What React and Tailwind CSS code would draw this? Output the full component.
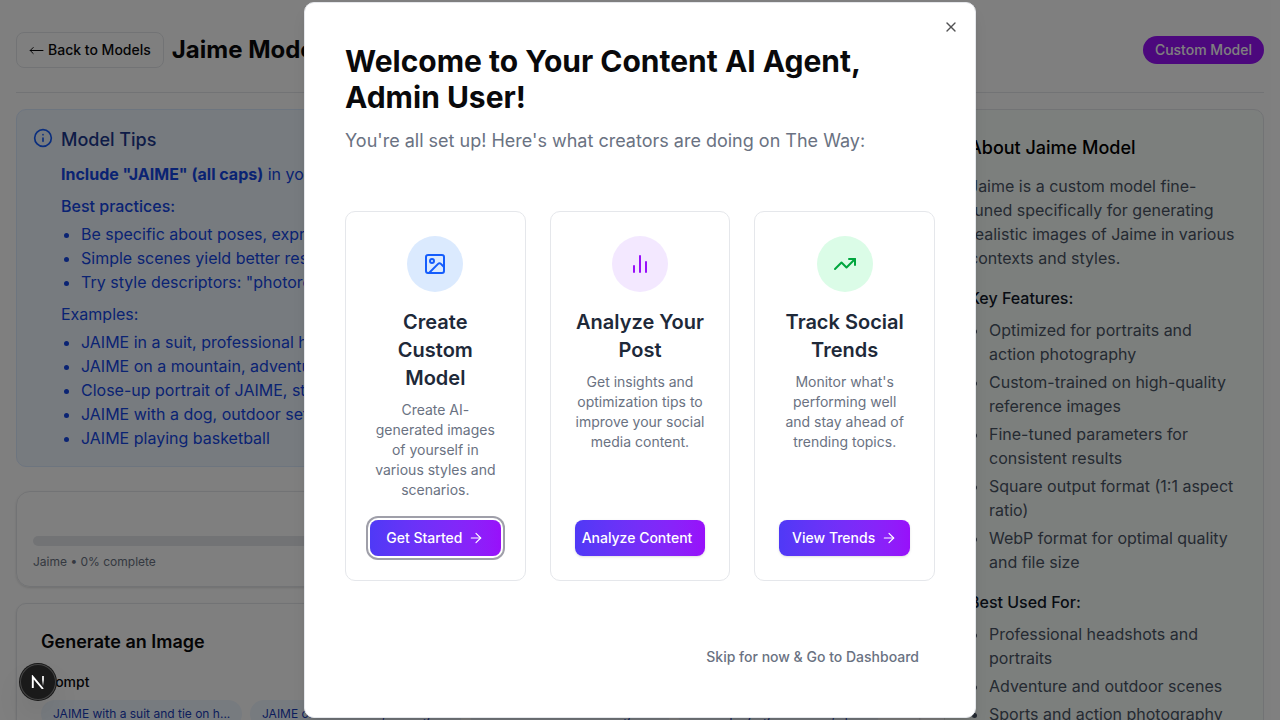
import React from "react";
import { ArrowRight, Info, TrendingUp, X } from "lucide-react";

const practices = [
  "Be specific about poses, expressions, and settings",
  "Simple scenes yield better results than complex ones",
  'Try style descriptors: "photorealistic", "cinematic", "portrait"',
];
const examples = [
  "JAIME in a suit, professional headshot, studio lighting",
  "JAIME on a mountain, adventure photography",
  "Close-up portrait of JAIME, studio lighting",
  "JAIME with a dog, outdoor setting",
  "JAIME playing basketball",
];
const features = [
  "Optimized for portraits and action photography",
  "Custom-trained on high-quality reference images",
  "Fine-tuned parameters for consistent results",
  "Square output format (1:1 aspect ratio)",
  "WebP format for optimal quality and file size",
];
const uses = [
  "Professional headshots and portraits",
  "Adventure and outdoor scenes",
  "Sports and action photography",
];
const prompts = [
  { text: "JAIME with a suit and tie on h...", width: "w-[201px]" },
  { text: "JAIME on a mountain, looking ...", width: "w-[212px]" },
  { text: "JAIME in a modern setting wit...", width: "w-[200px]" },
  { text: "JAIME playing basketball, spo...", width: "w-[201px]" },
];

function BackArrow() {
  return (
    <svg width="15" height="10" viewBox="0 0 15 10" fill="none" stroke="currentColor" strokeWidth="1" strokeLinecap="round" strokeLinejoin="round">
      <path d="M14 5.5H1.2M4.2 2.5l-3 3 3 3" />
    </svg>
  );
}

function ImageIcon() {
  return (
    <svg width="24" height="24" viewBox="0 0 24 24" fill="none" stroke="currentColor" strokeWidth="2" strokeLinecap="round" strokeLinejoin="round">
      <rect x="3" y="3" width="18" height="18" rx="2" />
      <circle cx="9" cy="9" r="2" />
      <path d="m21 15-3.086-3.086a2 2 0 0 0-2.828 0L6 21" />
    </svg>
  );
}

function BarsIcon() {
  return (
    <svg width="24" height="24" viewBox="0 0 24 24" fill="none" stroke="currentColor" strokeWidth="2" strokeLinecap="round" strokeLinejoin="round">
      <path d="M18 20V10M12 20V4M6 20v-6" />
    </svg>
  );
}

const cards = [
  {
    title: "Create Custom Model",
    text: "Create AI-generated images of yourself in various styles and scenarios.",
    action: "Get Started",
    icon: <ImageIcon />,
    tint: "bg-blue-100 text-blue-600",
    button: "ring-2 ring-[#9f9fa9] ring-offset-2 px-4",
    arrow: true,
  },
  {
    title: "Analyze Your Post",
    text: "Get insights and optimization tips to improve your social media content.",
    action: "Analyze Content",
    icon: <BarsIcon />,
    tint: "bg-purple-100 text-purple-600",
    button: "shadow-sm pr-1.5",
    arrow: false,
  },
  {
    title: "Track Social Trends",
    text: "Monitor what's performing well and stay ahead of trending topics.",
    action: "View Trends",
    icon: <TrendingUp size={24} />,
    tint: "bg-green-100 text-green-600",
    button: "shadow-sm px-3",
    arrow: true,
  },
];

function Page() {
  return (
    <div className="flex h-[720px] flex-col overflow-hidden bg-white px-4 pt-8">
      <header className="flex shrink-0 items-center justify-between border-b border-gray-200 pb-6">
        <div className="flex items-center gap-2">
          <button className="flex h-9 items-center gap-1 rounded-[8px] border border-gray-200 px-3 text-sm font-medium whitespace-nowrap">
            <BackArrow />
            Back to Models
          </button>
          <h1 className="text-2xl font-bold">Jaime Model</h1>
        </div>
        <span className="rounded-full bg-purple-600 px-3 py-1 text-sm font-medium text-white">Custom Model</span>
      </header>
      <div className="mt-4 flex items-start gap-6">
        <main className="min-w-0 flex-1">
          <section className="flex gap-2 rounded-[10px] border border-blue-100 bg-blue-50 p-4 text-blue-700">
            <Info size={20} className="mt-0.5 shrink-0 text-blue-600" />
            <div>
              <h2 className="text-lg leading-7 font-medium text-blue-900">Model Tips</h2>
              <p className="mt-2"><strong>Include "JAIME" (all caps)</strong> in your prompt to activate the model</p>
              <p className="mt-2 font-medium">Best practices:</p>
              <ul className="mt-1 list-disc pl-5">
                {practices.map((t) => <li key={t}>{t}</li>)}
              </ul>
              <p className="mt-2">Examples:</p>
              <ul className="mt-1 list-disc pl-5">
                {examples.map((t) => <li key={t}>{t}</li>)}
              </ul>
            </div>
          </section>
          <section className="mt-6 h-24 rounded-[14px] border border-gray-200 px-4 pt-11 shadow-sm">
            <div className="h-2.5 rounded-full bg-gray-200" />
            <p className="mt-2 text-xs text-gray-500">Jaime • 0% complete</p>
          </section>
          <section className="mt-4 rounded-[10px] border border-gray-200 p-6 shadow-sm">
            <h2 className="text-lg leading-7 font-semibold">Generate an Image</h2>
            <p className="mt-4 text-sm leading-5 font-medium">Prompt</p>
            <div className="mt-2 flex gap-2">
              {prompts.map((p) => (
                <span key={p.text} className={"shrink-0 rounded-full bg-blue-50 px-3 py-1.5 text-xs whitespace-nowrap text-blue-800 " + p.width}>{p.text}</span>
              ))}
            </div>
          </section>
        </main>
        <aside className="w-80 shrink-0 rounded-[10px] border border-gray-200 bg-[#f9fefb] p-6 text-gray-600">
          <h2 className="text-lg leading-7 font-medium text-black">About Jaime Model</h2>
          <p className="mt-3">
            Jaime is a custom model fine-tuned specifically for generating realistic images of Jaime in various contexts and styles.
          </p>
          <h3 className="mt-4 font-medium text-gray-900">Key Features:</h3>
          <ul className="mt-2 list-disc space-y-1 pl-5">
            {features.map((t) => <li key={t}>{t}</li>)}
          </ul>
          <h3 className="mt-4 font-medium text-gray-900">Best Used For:</h3>
          <ul className="mt-2 list-disc space-y-1 pl-5">
            {uses.map((t) => <li key={t}>{t}</li>)}
          </ul>
        </aside>
      </div>
    </div>
  );
}

function WelcomeDialog() {
  return (
    <div className="relative flex h-[716px] w-[672px] flex-col rounded-[10px] border border-gray-200 bg-white p-10 shadow-lg">
      <h2 className="text-3xl leading-9 font-bold text-[#09090b]">
        Welcome to Your Content AI Agent, Admin User!
      </h2>
      <p className="mt-3 text-lg leading-7 text-gray-500">
        You're all set up! Here's what creators are doing on The Way:
      </p>
      <div className="mt-14 grid h-[370px] grid-cols-3 gap-6">
        {cards.map((c) => (
          <div key={c.title} className="flex min-w-0 flex-col items-center rounded-[10px] border border-gray-200 p-6 text-center">
            <div className={"flex size-14 shrink-0 items-center justify-center rounded-full " + c.tint}>{c.icon}</div>
            <h3 className="mt-4 text-xl leading-7 font-semibold text-gray-800">{c.title}</h3>
            <p className="mt-2 text-sm leading-5 text-gray-500">{c.text}</p>
            <button className={"mt-auto flex h-9 w-full items-center justify-center gap-1.5 rounded-[8px] bg-linear-to-r from-[#4f39f6] to-[#9810fa] text-sm font-medium whitespace-nowrap text-white " + c.button}>
              {c.action}
              {c.arrow && <ArrowRight size={16} strokeWidth={1.75} />}
            </button>
          </div>
        ))}
      </div>
      <div className="mt-[58px] flex justify-end">
        <button className="h-9 px-4 text-sm font-medium text-gray-500">Skip for now &amp; Go to Dashboard</button>
      </div>
      <button aria-label="Close" className="absolute top-4 right-4 text-[#09090b] opacity-70">
        <X size={16} />
      </button>
    </div>
  );
}

export default function App() {
  return (
    <div className="relative h-[720px] w-full overflow-hidden font-['Inter',sans-serif] text-[#09090b]">
      <Page />
      <div className="absolute inset-0 flex items-center justify-center bg-black/50">
        <WelcomeDialog />
      </div>
      <div className="absolute top-[664px] left-5 flex size-9 items-center justify-center rounded-full bg-[#1a1a1a] shadow-[0_0_0_1px_#171717,inset_0_0_0_1px_#454545,0_16px_32px_-8px_rgba(0,0,0,0.24)]">
        <svg width="14" height="14" viewBox="0 0 14 14" fill="none">
          <defs>
            <linearGradient id="fade" x1="12" y1="1" x2="12" y2="11" gradientUnits="userSpaceOnUse">
              <stop offset="0.4" stopColor="#fff" />
              <stop offset="1" stopColor="#fff" stopOpacity="0" />
            </linearGradient>
          </defs>
          <path d="M1.8 13V1.8L12 14" stroke="#fff" strokeWidth="1.9" />
          <path d="M12 1v10" stroke="url(#fade)" strokeWidth="1.7" />
        </svg>
      </div>
    </div>
  );
}
